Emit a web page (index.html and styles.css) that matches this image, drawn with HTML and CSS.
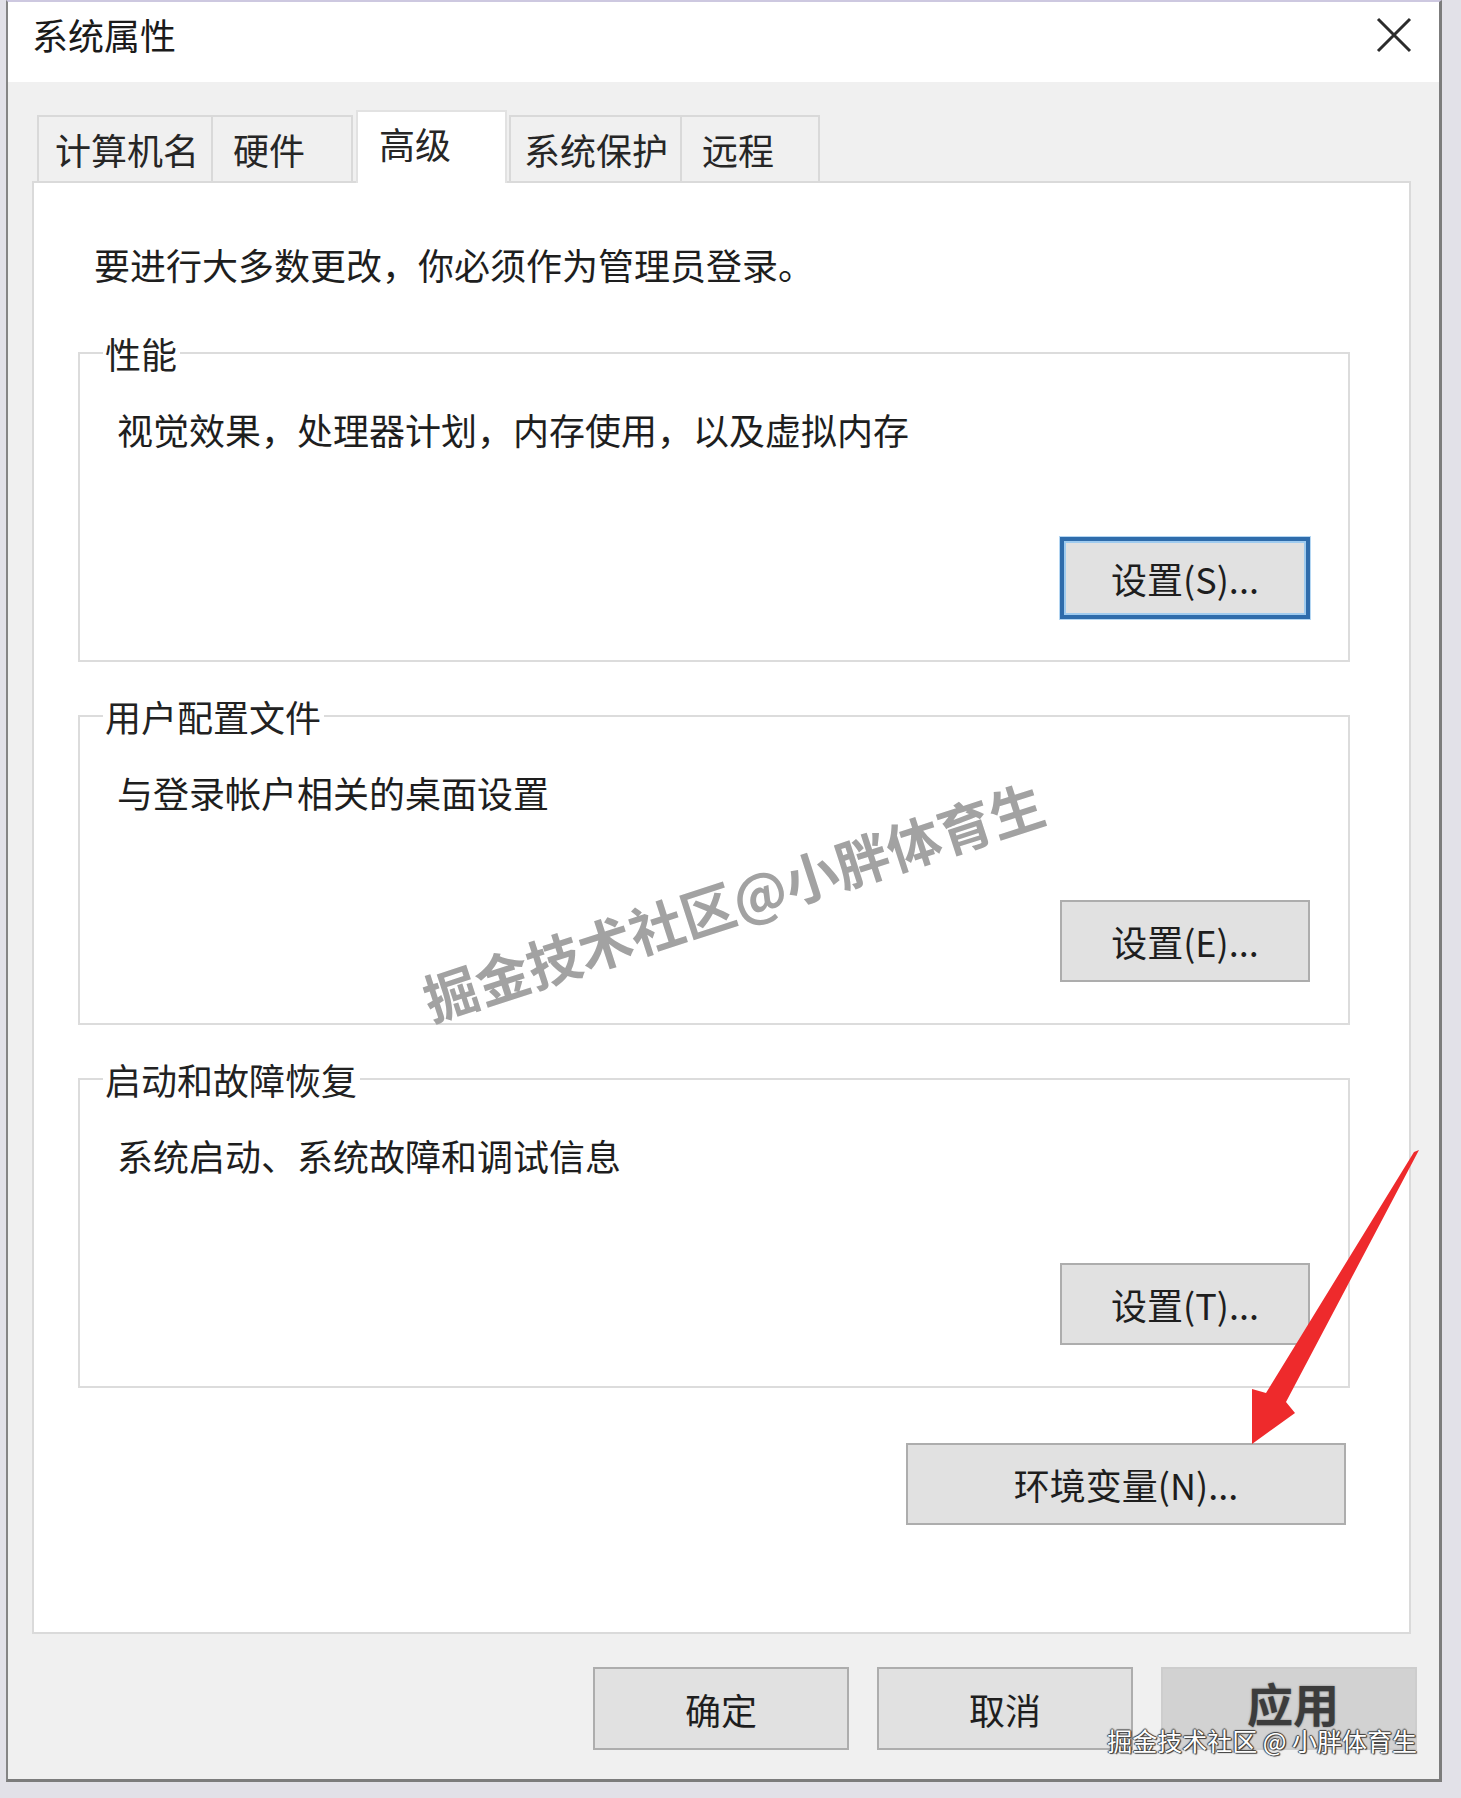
FILE: index.html
```html
<!DOCTYPE html>
<html lang="zh-CN">
<head>
<meta charset="utf-8">
<title>系统属性</title>
<link rel="stylesheet" href="styles.css">
</head>
<body>
<div class="window">
  <div class="titlebar">
    <span class="title">系统属性</span>
    <svg class="close" width="36" height="36" viewBox="0 0 36 36" aria-hidden="true">
      <path d="M2 2 L34 34 M34 2 L2 34" stroke="#2b2b2b" stroke-width="3" fill="none"/>
    </svg>
  </div>
  <div class="dialog">
    <div class="tabs">
      <div class="tab tab-1">计算机名</div>
      <div class="tab tab-2">硬件</div>
      <div class="tab tab-3 selected">高级</div>
      <div class="tab tab-4">系统保护</div>
      <div class="tab tab-5">远程</div>
    </div>
    <div class="panel">
      <p class="intro">要进行大多数更改，你必须作为管理员登录。</p>
      <fieldset class="group first">
        <legend>性能</legend>
        <p class="desc">视觉效果，处理器计划，内存使用，以及虚拟内存</p>
        <div class="row"><button class="btn focused">设置(S)...</button></div>
      </fieldset>
      <fieldset class="group">
        <legend>用户配置文件</legend>
        <p class="desc">与登录帐户相关的桌面设置</p>
        <div class="row"><button class="btn">设置(E)...</button></div>
      </fieldset>
      <fieldset class="group">
        <legend>启动和故障恢复</legend>
        <p class="desc">系统启动、系统故障和调试信息</p>
        <div class="row"><button class="btn">设置(T)...</button></div>
      </fieldset>
      <button class="btn env">环境变量(N)...</button>
    </div>
    <div class="footer">
      <button class="btn foot">确定</button>
      <button class="btn foot">取消</button>
      <button class="btn foot apply">应用</button>
    </div>
  </div>
</div>

<div class="watermark">掘金技术社区@小胖体育生</div>
<div class="credit">掘金技术社区 @ 小胖体育生</div>
<svg class="arrow" width="1461" height="1798" viewBox="0 0 1461 1798" aria-hidden="true">
  <polygon points="1419,1150 1286,1402 1295,1413 1252,1444 1252,1389 1266,1393 1414,1152" fill="#ee2a2c"/>
</svg>
</body>
</html>
```

FILE: styles.css
```css
* { box-sizing: border-box; }

html, body {
  margin: 0;
  padding: 0;
}

body {
  width: 1461px;
  height: 1798px;
  overflow: hidden;
  position: relative;
  background: #e2e1e8;
  font-family: "Noto Sans CJK SC", "Microsoft YaHei", sans-serif;
  font-size: 36px;
  color: #1e1e1e;
}

.window {
  margin-left: 6px;
  width: 1436px;
  border-top: 2px solid #cdc8e0;
  border-left: 2px solid #858585;
  border-right: 3px solid #7c7c7c;
  border-bottom: 3px solid #7c7c7c;
  background: #f0f0f0;
}

.titlebar {
  height: 80px;
  background: #ffffff;
  display: flex;
  align-items: center;
  justify-content: space-between;
  padding: 0 27px 0 24px;
}

.title {
  line-height: 50px;
  color: #1a1a1a;
  margin-top: -16px;
}

.close {
  display: block;
  margin-top: -14px;
}

.dialog {
  padding: 28px 28px 0 24px;
}

.tabs {
  display: flex;
  align-items: flex-end;
  height: 71px;
  padding-left: 5px;
  position: relative;
  z-index: 1;
}

.tab {
  height: 66px;
  line-height: 64px;
  border: 2px solid #d9d9d9;
  border-bottom: none;
  background: #f0f0f0;
  color: #262626;
  margin-right: -2px;
  white-space: nowrap;
}

.tab-1 { padding: 0 12px 0 16px; }
.tab-2 { padding: 0 46px 0 20px; }
.tab-3 { padding: 0 54px 0 21px; }
.tab-4 { padding: 0 12px 0 13px; margin-left: 2px; }
.tab-5 { padding: 0 44px 0 20px; }

.tab.selected {
  height: 73px;
  line-height: 62px;
  margin-bottom: -2px;
  background: #ffffff;
  border-color: #e2e2e2;
  margin-left: 5px;
  margin-right: 0;
}

.panel {
  background: #ffffff;
  border: 2px solid #dadada;
  padding: 56px 0 107px 44px;
  display: flex;
  flex-direction: column;
}

.intro {
  margin: 0 0 0 16px;
  line-height: 50px;
}

.group {
  margin: 29px 0 0 0;
  width: 1272px;
  border: 2px solid #dcdcdc;
  padding: 26px 38px 41px 37px;
  min-inline-size: 0;
}

.group.first {
  margin-top: 39px;
}

.group legend {
  margin-left: -14px;
  padding: 0 3px 0 2px;
  line-height: 50px;
  color: #222;
}

.desc {
  margin: 0;
  line-height: 50px;
}

.row {
  display: flex;
  justify-content: flex-end;
  margin-top: 83px;
}

.btn {
  font-family: "Noto Sans CJK SC", "Microsoft YaHei", sans-serif;
  font-size: 36px;
  color: #1e1e1e;
  background: #e1e1e1;
  border: 2px solid #adadad;
  width: 250px;
  height: 82px;
  padding: 0;
  line-height: 1;
  text-align: center;
}

.btn.focused {
  border: 4px solid #2f6cab;
  box-shadow: 0 0 0 1px #b5d7f3, inset 0 0 0 2px #9fcbef;
}

.btn.env {
  align-self: flex-end;
  width: 440px;
  margin: 55px 63px 0 0;
}

.footer {
  display: flex;
  justify-content: flex-end;
  gap: 28px;
  padding: 33px 0 29px 0;
  margin-right: -6px;
}

.btn.foot {
  width: 256px;
  height: 83px;
}

.btn.apply {
  background: #d2d2d2;
  border-color: #cdcdcd;
  color: #3c3c3c;
  font-size: 46px;
  font-weight: 700;
  padding: 0 0 14px 8px;
  text-shadow: 0 0 2px rgba(60, 60, 60, 0.6);
}

.watermark {
  position: absolute;
  left: 733px;
  top: 900px;
  transform: translate(-50%, -50%) rotate(-18deg);
  font-size: 54px;
  font-weight: 700;
  color: #a2a2a2;
  white-space: nowrap;
  line-height: 1;
}

.credit {
  position: absolute;
  right: 44px;
  top: 1723px;
  font-size: 25px;
  line-height: 34px;
  color: #ffffff;
  white-space: nowrap;
  text-shadow: 1px 1px 1px #3a3a3a, -1px 0 1px #3a3a3a, 0 -1px 1px #3a3a3a, 1px 0 1px #3a3a3a;
}

.arrow {
  position: absolute;
  left: 0;
  top: 0;
  pointer-events: none;
}
```
